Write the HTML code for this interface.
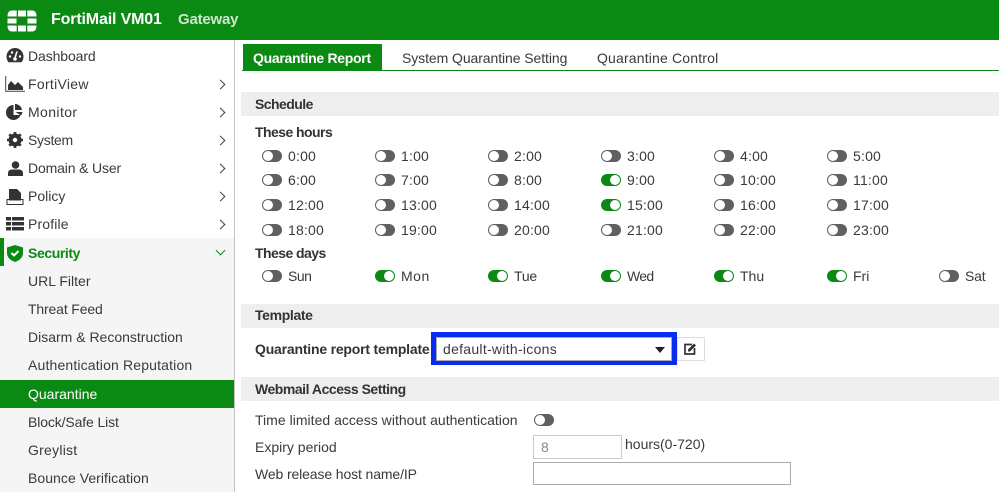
<!DOCTYPE html>
<html><head><meta charset="utf-8"><style>
html,body{margin:0;padding:0;background:#fff}
#p{position:relative;width:999px;height:492px;overflow:hidden;font-family:"Liberation Sans",sans-serif;font-size:14px;color:#3a3a3a;background:#fff}
#p div,#p span.a{position:absolute;white-space:nowrap}
.t{line-height:18px;height:18px}
.n{letter-spacing:.2px}
.b{font-weight:bold;color:#333;letter-spacing:-.55px}
.sec{left:241px;width:758px;height:24px;background:#eeeeee}
.tg{width:20px;height:12px;border-radius:6px;background:#606060}
.tg:after{content:"";position:absolute;left:1px;top:1px;width:10px;height:10px;border-radius:5px;background:#fff}
.tg.on{background:#0a8a14}
.tg.on:after{left:9px}
.nav{left:28px}
.ch{left:217px;width:6px;height:6px;border-top:1.5px solid #444;border-right:1.5px solid #444;transform:rotate(45deg)}
svg{position:absolute}
</style></head><body><div id="p">
<div style="left:0;top:0;width:999px;height:40px;background:#0b8a13"></div>
<svg style="left:7px;top:10px" width="30" height="22" viewBox="0 0 30 22" fill="#fff"><path d="M11 0.500h8v6h-8zM11 15.500h8v6h-8zM9.700 .5H5Q.5 .5 .5 6.500h9.200zM20.300 .5h4.700q4.500 0 4.500 6h-9.200zM.5 8.500h9v5h-9zM20.500 8.500h9v5h-9zM.5 15.500h9.200v6H5q-4.500 0-4.500-6zM20.300 15.500h9.200q0 6-4.500 6h-4.700z"/></svg>
<div class="t" style="left:51px;top:11px;color:#fff;font-weight:bold;font-size:16px;letter-spacing:-.15px">FortiMail VM01</div>
<div class="t" style="left:178px;top:11px;color:#cfe6cf;font-weight:bold;font-size:15px;letter-spacing:-.2px">Gateway</div>

<div style="left:234px;top:40px;width:1px;height:452px;background:#c4c4c4"></div>
<div style="left:0;top:238px;width:234px;height:142px;background:#f5f5f5"></div>
<div style="left:0;top:380px;width:234px;height:28px;background:#0b8a13"></div>
<div style="left:0;top:408px;width:234px;height:84px;background:#f5f5f5"></div>
<div style="left:0;top:238px;width:4px;height:28px;background:#0b8a13"></div>

<svg style="left:6px;top:47px" width="18" height="17" viewBox="0 0 18 17"><path d="M9 1a8.500 8.500 0 0 0-8.500 8.500c0 2.200.7 4.200 2 5.800h13c1.300-1.600 2-3.600 2-5.800A8.500 8.500 0 0 0 9 1z" fill="#333"/><path d="M9 11L11 4.500" stroke="#fff" stroke-width="1.600"/><circle cx="4" cy="9.500" r="1.200" fill="#fff"/><circle cx="6" cy="5.500" r="1.200" fill="#fff"/><circle cx="14" cy="9.500" r="1.200" fill="#fff"/><circle cx="9" cy="12" r="1.800" fill="#fff"/></svg>
<svg style="left:5px;top:76px" width="20" height="16" viewBox="0 0 20 16"><path d="M.700 0v15.300H20" fill="none" stroke="#444"/><path d="M3 14V9l3-4 4 4 3-3 2 2 3 3v3z" fill="#333"/></svg>
<svg style="left:6px;top:104px" width="18" height="16" viewBox="0 0 18 16" fill="#333"><path d="M7.500 1a7.500 7.500 0 1 0 7 10H7.500z"/><path d="M9 0a7 7 0 0 1 7 6H9zM9.500 8h7a7 7 0 0 1-1.500 3.500z"/></svg>
<svg style="left:7px;top:132px" width="16" height="16" viewBox="0 0 16 16"><circle cx="8" cy="8" r="4.800" fill="none" stroke="#333" stroke-width="3.400"/><path d="M8 0v16M0 8h16M2.300 2.300l11.400 11.400M13.700 2.300L2.300 13.700" stroke="#333" stroke-width="2.600"/><circle cx="8" cy="8" r="2.200" fill="#fff"/></svg>
<svg style="left:8px;top:161px" width="15" height="15" viewBox="0 0 15 15" fill="#333"><circle cx="7.500" cy="4" r="3.800"/><path d="M0 15v-2.500Q0 8.500 4 8.500h7q4 0 4 4V15z"/></svg>
<svg style="left:6px;top:189px" width="18" height="16" viewBox="0 0 18 16"><path d="M3 0h8l4 4v6H3z" fill="#333"/><path d="M1 10.500h16v5H1z" fill="#fff" stroke="#333"/><path d="M3 10h12v1.500H3z" fill="#333"/></svg>
<svg style="left:6px;top:217px" width="18" height="14" viewBox="0 0 18 14" fill="#333"><path d="M0 0h5v3.500H0zM6 0h12v3.500H6zM0 5h5v3.500H0zM6 5h12v3.500H6zM0 10h5v3.500H0zM6 10h12v3.500H6z"/></svg>
<svg style="left:7px;top:245px" width="16" height="17" viewBox="0 0 16 17"><path d="M8 0l8 2.500V8q0 6-8 9-8-3-8-9V2.500z" fill="#0b8a13"/><path d="M4.500 8l2.500 2.500 4.500-4.500" fill="none" stroke="#fff" stroke-width="2"/></svg>

<div class="t nav" style="top:47px;letter-spacing:-.1px">Dashboard</div>
<div class="t nav" style="top:75px;letter-spacing:.3px">FortiView</div><div class="ch" style="top:81px"></div>
<div class="t nav" style="top:103px;letter-spacing:.4px">Monitor</div><div class="ch" style="top:109px"></div>
<div class="t nav" style="top:131px;letter-spacing:-.3px">System</div><div class="ch" style="top:137px"></div>
<div class="t nav" style="top:159px;letter-spacing:-.15px">Domain &amp; User</div><div class="ch" style="top:165px"></div>
<div class="t nav" style="top:187px">Policy</div><div class="ch" style="top:193px"></div>
<div class="t nav" style="top:215px;letter-spacing:.15px">Profile</div><div class="ch" style="top:221px"></div>
<div class="t nav" style="top:244px;color:#0b8a13;font-weight:bold;letter-spacing:-.4px">Security</div>
<div style="left:217px;top:247px;width:6px;height:6px;border-right:1.500px solid #0b8a13;border-bottom:1.500px solid #0b8a13;transform:rotate(45deg)"></div>
<div class="t nav" style="top:272px">URL Filter</div>
<div class="t nav" style="top:300px;letter-spacing:-.15px">Threat Feed</div>
<div class="t nav" style="top:328px">Disarm &amp; Reconstruction</div>
<div class="t nav" style="top:356px;letter-spacing:.16px">Authentication Reputation</div>
<div class="t nav" style="top:385px;color:#fff">Quarantine</div>
<div class="t nav" style="top:413px;letter-spacing:-.12px">Block/Safe List</div>
<div class="t nav" style="top:441px;letter-spacing:.25px">Greylist</div>
<div class="t nav" style="top:469px;letter-spacing:.05px">Bounce Verification</div>

<div style="left:242px;top:70px;width:757px;height:1px;background:#0b8a13"></div>
<div style="left:243px;top:44px;width:139px;height:26px;background:#0b8a13"></div>
<div class="t" style="left:253px;top:49px;color:#fff;font-weight:bold;font-size:14px;letter-spacing:-.3px">Quarantine Report</div>
<div class="t" style="left:402px;top:49px;letter-spacing:-.08px">System Quarantine Setting</div>
<div class="t" style="left:597px;top:49px;letter-spacing:.17px">Quarantine Control</div>

<div class="sec" style="top:92px"></div>
<div class="t b" style="left:255px;top:95px">Schedule</div>
<div class="t b" style="left:255px;top:123px">These hours</div>

<div class="tg" style="left:262px;top:150px"></div><div class="t n" style="left:288px;top:147px">0:00</div>
<div class="tg" style="left:375px;top:150px"></div><div class="t n" style="left:401px;top:147px">1:00</div>
<div class="tg" style="left:488px;top:150px"></div><div class="t n" style="left:514px;top:147px">2:00</div>
<div class="tg" style="left:601px;top:150px"></div><div class="t n" style="left:627px;top:147px">3:00</div>
<div class="tg" style="left:714px;top:150px"></div><div class="t n" style="left:740px;top:147px">4:00</div>
<div class="tg" style="left:827px;top:150px"></div><div class="t n" style="left:853px;top:147px">5:00</div>

<div class="tg" style="left:262px;top:174px"></div><div class="t n" style="left:288px;top:171px">6:00</div>
<div class="tg" style="left:375px;top:174px"></div><div class="t n" style="left:401px;top:171px">7:00</div>
<div class="tg" style="left:488px;top:174px"></div><div class="t n" style="left:514px;top:171px">8:00</div>
<div class="tg on" style="left:601px;top:174px"></div><div class="t n" style="left:627px;top:171px">9:00</div>
<div class="tg" style="left:714px;top:174px"></div><div class="t n" style="left:740px;top:171px">10:00</div>
<div class="tg" style="left:827px;top:174px"></div><div class="t n" style="left:853px;top:171px">11:00</div>

<div class="tg" style="left:262px;top:199px"></div><div class="t n" style="left:288px;top:196px">12:00</div>
<div class="tg" style="left:375px;top:199px"></div><div class="t n" style="left:401px;top:196px">13:00</div>
<div class="tg" style="left:488px;top:199px"></div><div class="t n" style="left:514px;top:196px">14:00</div>
<div class="tg on" style="left:601px;top:199px"></div><div class="t n" style="left:627px;top:196px">15:00</div>
<div class="tg" style="left:714px;top:199px"></div><div class="t n" style="left:740px;top:196px">16:00</div>
<div class="tg" style="left:827px;top:199px"></div><div class="t n" style="left:853px;top:196px">17:00</div>

<div class="tg" style="left:262px;top:224px"></div><div class="t n" style="left:288px;top:221px">18:00</div>
<div class="tg" style="left:375px;top:224px"></div><div class="t n" style="left:401px;top:221px">19:00</div>
<div class="tg" style="left:488px;top:224px"></div><div class="t n" style="left:514px;top:221px">20:00</div>
<div class="tg" style="left:601px;top:224px"></div><div class="t n" style="left:627px;top:221px">21:00</div>
<div class="tg" style="left:714px;top:224px"></div><div class="t n" style="left:740px;top:221px">22:00</div>
<div class="tg" style="left:827px;top:224px"></div><div class="t n" style="left:853px;top:221px">23:00</div>

<div class="t b" style="left:255px;top:244px">These days</div>
<div class="tg" style="left:262px;top:270px"></div><div class="t" style="left:288px;top:267px;letter-spacing:-.5px">Sun</div>
<div class="tg on" style="left:375px;top:270px"></div><div class="t" style="left:401px;top:267px;letter-spacing:.5px">Mon</div>
<div class="tg on" style="left:488px;top:270px"></div><div class="t" style="left:514px;top:267px;letter-spacing:-.2px">Tue</div>
<div class="tg on" style="left:601px;top:270px"></div><div class="t" style="left:627px;top:267px;letter-spacing:-.7px">Wed</div>
<div class="tg on" style="left:714px;top:270px"></div><div class="t" style="left:740px;top:267px">Thu</div>
<div class="tg on" style="left:827px;top:270px"></div><div class="t" style="left:853px;top:267px">Fri</div>
<div class="tg" style="left:939px;top:270px"></div><div class="t" style="left:965px;top:267px;letter-spacing:-.2px">Sat</div>

<div class="sec" style="top:304px"></div>
<div class="t b" style="left:255px;top:306px;letter-spacing:-.35px">Template</div>
<div class="t b" style="left:255px;top:340px;letter-spacing:-.2px">Quarantine report template</div>
<div style="left:431px;top:332px;width:246px;height:33px;background:#0a2cf0"></div>
<div style="left:436px;top:337px;width:234px;height:22px;background:#fff;border:1px solid #aaa"></div>
<div class="t" style="left:443px;top:340px;letter-spacing:.28px">default-with-icons</div>
<div style="left:655px;top:347px;width:0;height:0;border-left:5.500px solid transparent;border-right:5.500px solid transparent;border-top:6px solid #222"></div>
<div style="left:677px;top:337px;width:26px;height:22px;background:#fff;border:1px solid #ddd"></div>
<svg style="left:683px;top:342px" width="14" height="14" viewBox="0 0 14 14"><path d="M9 2.500H2v9.500h9.500V6" fill="none" stroke="#333" stroke-width="1.700"/><path d="M5 9.500V7.500l6-6 2 2-6 6z" fill="#333"/></svg>

<div class="sec" style="top:377px"></div>
<div class="t b" style="left:255px;top:380px;letter-spacing:-.47px">Webmail Access Setting</div>
<div class="t" style="left:255px;top:411px;letter-spacing:.02px">Time limited access without authentication</div>
<div class="tg" style="left:534px;top:414px"></div>
<div class="t" style="left:255px;top:438px">Expiry period</div>
<div style="left:533px;top:435px;width:87px;height:22px;border:1px solid #ccc;background:#fff"></div>
<div class="t" style="left:541px;top:438px;color:#888">8</div>
<div class="t" style="left:625px;top:435px">hours(0-720)</div>
<div class="t" style="left:255px;top:465px;letter-spacing:-.12px">Web release host name/IP</div>
<div style="left:533px;top:462px;width:256px;height:21px;border:1px solid #aaa;background:#fff"></div>
</div></body></html>
